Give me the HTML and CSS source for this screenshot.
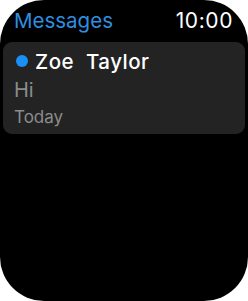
FILE: index.html
```html
<!DOCTYPE html>
<html lang="en">
<head>
  <meta charset="UTF-8">
  <title>Messages</title>
  <link rel="stylesheet" href="styles.css">
</head>
<body>
  <div class="screen">
    <div class="header">
      <span class="title">Messages</span>
      <span class="time">10:00</span>
    </div>
    <div class="card">
      <div class="name"><span class="dot"></span>Zoe&nbsp; Taylor</div>
      <div class="preview">Hi</div>
      <div class="date">Today</div>
    </div>
  </div>
</body>
</html>
```

FILE: styles.css
```css
body {
  margin: 0;
  background: #fff;
  font-family: Inter, "Noto Sans", sans-serif;
}

.screen {
  width: 248px;
  height: 301px;
  background: #000;
  border-radius: 44px;
  overflow: hidden;
  box-sizing: border-box;
  padding: 8px 3px 0;
}

.header {
  display: flex;
  justify-content: space-between;
  align-items: baseline;
  padding: 0 12px 0 11px;
  height: 34px;
}

.title {
  color: #2f8fe0;
  font-size: 20.5px;
}

.time {
  color: #fff;
  font-size: 21px;
  letter-spacing: 0.6px;
}

.card {
  background: #232323;
  border-radius: 9px;
  padding: 5px 11px 6px;
  height: 92px;
  box-sizing: border-box;
}

.name {
  display: flex;
  align-items: center;
  color: #fff;
  font-size: 20.5px;
  font-weight: 500;
  letter-spacing: 0.5px;
  height: 28px;
}

.dot {
  width: 12px;
  height: 12px;
  border-radius: 50%;
  background: #1a8ff5;
  margin: 0 7px 0 2px;
}

.preview {
  color: #8c8c8c;
  font-size: 20px;
  height: 30px;
  line-height: 30px;
}

.date {
  color: #8c8c8c;
  font-size: 17px;
  line-height: 24px;
}
```
